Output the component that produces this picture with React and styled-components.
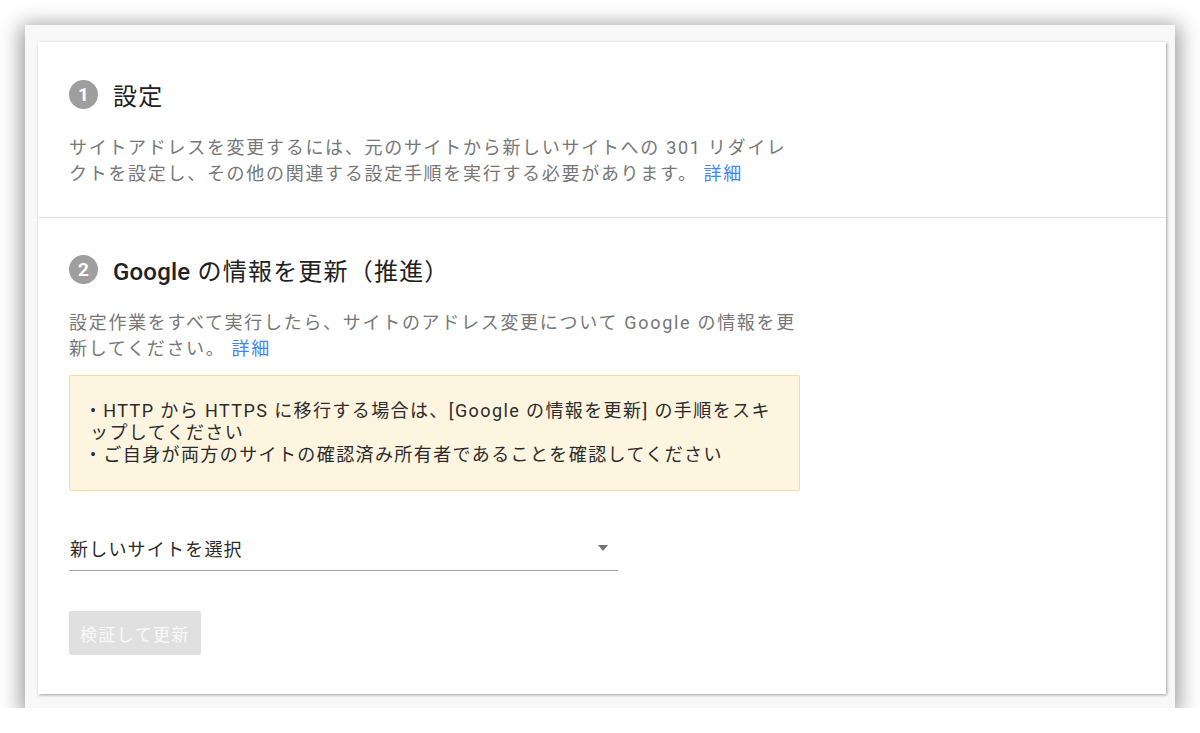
import React from "react";
import styled, { createGlobalStyle } from "styled-components";

const GlobalStyle = createGlobalStyle`
  html, body {
    margin: 0;
    padding: 0;
    background: #ffffff;
  }
  body {
    font-family: Roboto, "Noto Sans CJK JP", sans-serif;
  }
`;

const Frame = styled.div`
  box-sizing: border-box;
  margin: 25px 0 0 25px;
  width: 1150px;
  height: 683px;
  padding: 17px 9px 14px 13px;
  background: #f8f8f8;
  box-shadow: 0 4px 20px 4px rgba(0, 0, 0, 0.4);
`;

const Card = styled.div`
  display: flex;
  flex-direction: column;
  height: 100%;
  background: #ffffff;
  box-shadow: 1px 1px 3px rgba(0, 0, 0, 0.35);
`;

const Section = styled.section`
  padding: ${(p) => (p.$first ? "38px 31px 30px" : "37px 31px 40px")};
  border-top: ${(p) => (p.$first ? "none" : "1px solid #e3e3e3")};
`;

const StepHeader = styled.div`
  display: flex;
  align-items: center;
  gap: 15px;
  height: 28px;
`;

const StepNumber = styled.span`
  display: flex;
  align-items: center;
  justify-content: center;
  width: 29px;
  height: 29px;
  border-radius: 50%;
  background: #9e9e9e;
  color: #ffffff;
  font-family: Roboto, sans-serif;
  font-weight: 700;
  font-size: 19px;
`;

const StepTitle = styled.h2`
  margin: 0;
  font-family: Roboto, "Noto Sans CJK JP", sans-serif;
  font-weight: 400;
  font-size: 24px;
  letter-spacing: 1.2px;
  color: #212121;

  b {
    font-weight: 500;
    letter-spacing: 0.2px;
  }
`;

const Column = styled.div`
  width: 731px;
`;

const Description = styled.p`
  margin: 27px 0 0;
  font-size: 18px;
  line-height: 26px;
  letter-spacing: 1.7px;
  color: #777777;
`;

const MoreLink = styled.a`
  margin-left: 6px;
  color: #4285f4;
  text-decoration: none;
`;

const Notice = styled.div`
  box-sizing: border-box;
  margin-top: 13px;
  height: 116px;
  padding: 24px 20px;
  background: #fef5e0;
  border: 1px solid #f8dc92;
  border-radius: 2px;
  font-size: 18px;
  line-height: 22px;
  letter-spacing: 1.4px;
  color: #2b2b2b;
`;

const NoticeLine = styled.div`
  white-space: normal;
`;

const SelectField = styled.div`
  box-sizing: border-box;
  display: flex;
  align-items: center;
  justify-content: space-between;
  width: 549px;
  height: 40px;
  margin-top: 40px;
  padding: 0 10px 6px 1px;
  border-bottom: 1px solid #a0a0a0;
  font-size: 18px;
  letter-spacing: 1.2px;
  color: #2b2b2b;
  cursor: pointer;
`;

const Caret = styled.span`
  width: 0;
  height: 0;
  border-left: 5.5px solid transparent;
  border-right: 5.5px solid transparent;
  border-top: 6px solid #757575;
`;

const SubmitButton = styled.button`
  margin-top: 40px;
  height: 44px;
  padding: 0 11px;
  border: none;
  border-radius: 2px;
  background: #e0e0e0;
  color: #f9f9f9;
  font-family: Roboto, "Noto Sans CJK JP", sans-serif;
  font-size: 17px;
  letter-spacing: 1.4px;
  cursor: default;
`;

const Actions = styled.div`
  display: flex;
`;

export default function App() {
  return (
    <>
      <GlobalStyle />
      <Frame>
        <Card>
          <Section $first>
            <StepHeader>
              <StepNumber>1</StepNumber>
              <StepTitle>設定</StepTitle>
            </StepHeader>
            <Column>
              <Description>
                <span>
                  サイトアドレスを変更するには、元のサイトから新しいサイトへの 301
                  リダイレクトを設定し、その他の関連する設定手順を実行する必要があります。
                </span>
                <MoreLink href="#">詳細</MoreLink>
              </Description>
            </Column>
          </Section>
          <Section>
            <StepHeader>
              <StepNumber>2</StepNumber>
              <StepTitle>
                <b>Google</b> の情報を更新（推進）
              </StepTitle>
            </StepHeader>
            <Column>
              <Description>
                <span>
                  設定作業をすべて実行したら、サイトのアドレス変更について Google
                  の情報を更新してください。
                </span>
                <MoreLink href="#">詳細</MoreLink>
              </Description>
              <Notice>
                <NoticeLine>
                  • HTTP から HTTPS に移行する場合は、[Google の情報を更新]
                  の手順をスキップしてください
                </NoticeLine>
                <NoticeLine>• ご自身が両方のサイトの確認済み所有者であることを確認してください</NoticeLine>
              </Notice>
            </Column>
            <SelectField>
              <span>新しいサイトを選択</span>
              <Caret />
            </SelectField>
            <Actions>
              <SubmitButton disabled>検証して更新</SubmitButton>
            </Actions>
          </Section>
        </Card>
      </Frame>
    </>
  );
}
